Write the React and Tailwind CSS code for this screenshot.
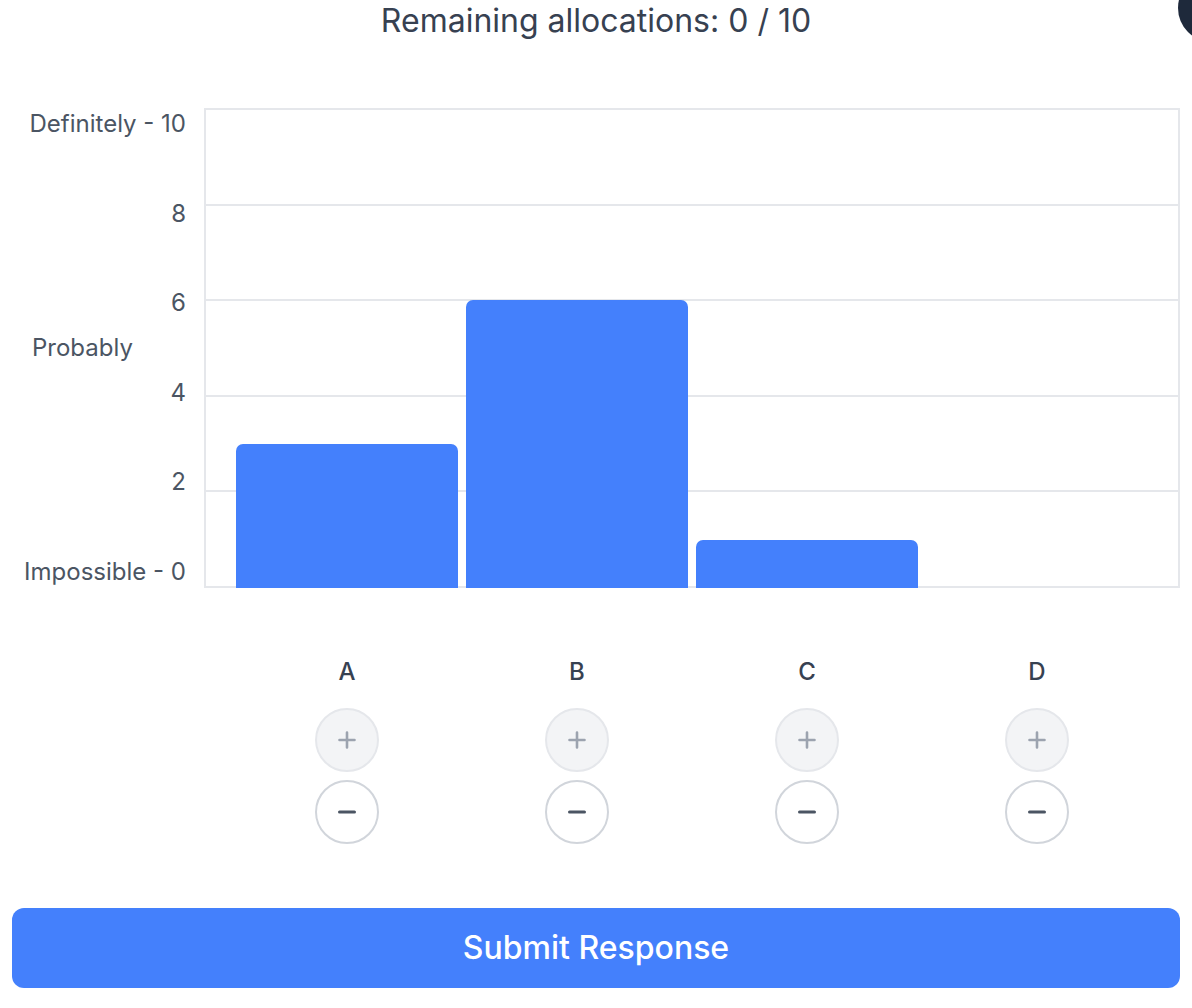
const OPTIONS = [
  { id: "A", value: 3 },
  { id: "B", value: 6 },
  { id: "C", value: 1 },
  { id: "D", value: 0 },
]

const MAX = 10
const Y_LABELS = ["Definitely - 10", "8", "6", "4", "2", "Impossible - 0"]

function PlusIcon() {
  return (
    <svg width="18" height="18" viewBox="0 0 18 18" fill="none" stroke="currentColor" strokeWidth="2.6" strokeLinecap="round">
      <path d="M9 1.5v15M1.5 9h15" />
    </svg>
  )
}

function MinusIcon() {
  return (
    <svg width="18" height="18" viewBox="0 0 18 18" fill="none" stroke="currentColor" strokeWidth="3" strokeLinecap="round">
      <path d="M1.5 9h15" />
    </svg>
  )
}

export default function App() {
  const used = OPTIONS.reduce((sum, o) => sum + o.value, 0)
  const remaining = MAX - used

  return (
    <div className="relative overflow-hidden bg-white px-3 pb-5 font-['Inter',sans-serif]">
      <div className="absolute top-[-26px] right-[-54px] w-[68px] h-[68px] rounded-full bg-[#1e293b]" />

      <h2 className="-mt-[3px] text-center text-[32px] leading-[48px] text-[#374151]">
        Remaining allocations: {remaining} / {MAX}
      </h2>

      <div className="mt-[63px] flex gap-[18px]">
        <div className="relative w-[174px] h-[480px] flex flex-col justify-between items-end">
          {Y_LABELS.map((label) => (
            <span key={label} className="text-[24px] leading-[32px] text-[#4b5563]">
              {label}
            </span>
          ))}
          <span className="absolute left-5 top-1/2 -translate-y-1/2 text-[24px] leading-[32px] text-[#4b5563]">
            Probably
          </span>
        </div>

        <div className="flex-1 grid h-[480px]">
          <div className="col-start-1 row-start-1 flex flex-col border-2 border-[#e5e7eb]">
            {[0, 1, 2, 3, 4].map((i) => (
              <div key={i} className={`flex-1 ${i < 4 ? "border-b-2 border-[#e5e7eb]" : ""}`} />
            ))}
          </div>
          <div className="col-start-1 row-start-1 flex items-end gap-2 px-8">
            {OPTIONS.map((o) => (
              <div key={o.id} className="flex-1 flex items-end h-full">
                {o.value > 0 && (
                  <div
                    className="w-full rounded-t-[7px] bg-[#4480fc]"
                    style={{ height: `${(o.value / MAX) * 100}%` }}
                  />
                )}
              </div>
            ))}
          </div>
        </div>
      </div>

      <div className="mt-[68px] ml-[192px] flex gap-2 px-8">
        {OPTIONS.map((o) => (
          <div key={o.id} className="flex-1 flex flex-col items-center">
            <span className="text-[24px] leading-[32px] font-medium text-[#374151]">{o.id}</span>
            <button
              disabled={remaining === 0}
              className="mt-5 w-16 h-16 rounded-full border-2 border-[#e5e7eb] bg-[#f3f4f6] text-[#9ca3af] flex items-center justify-center"
            >
              <PlusIcon />
            </button>
            <button className="mt-2 w-16 h-16 rounded-full border-2 border-[#d1d5db] bg-white text-[#4b5563] flex items-center justify-center">
              <MinusIcon />
            </button>
          </div>
        ))}
      </div>

      <button className="mt-16 w-full h-20 rounded-xl bg-[#4480fc] text-white text-[32px] font-medium">
        Submit Response
      </button>
    </div>
  )
}
